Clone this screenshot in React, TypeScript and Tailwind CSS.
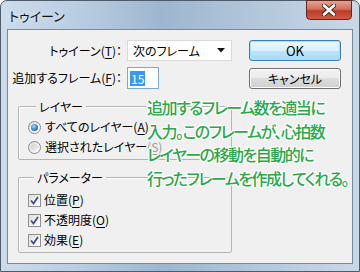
const font = "font-['Noto_Sans_CJK_JP','Noto_Sans',sans-serif] [font-feature-settings:'palt']";

function Key({ k }: { k: string }) {
  return (
    <>
      (<span className="underline underline-offset-[2px]">{k}</span>)
    </>
  );
}

function Radio({ checked }: { checked?: boolean }) {
  return (
    <span className="w-[13px] h-[13px] rounded-full border border-[#8a8a8a] bg-[linear-gradient(135deg,#dcdcdc,#ffffff)] flex items-center justify-center shrink-0">
      {checked ? (
        <span className="w-[7px] h-[7px] rounded-full bg-[radial-gradient(circle_at_40%_35%,#9fdcff,#2a78c8_60%,#1c4f8f)]" />
      ) : (
        <span className="w-[7px] h-[7px] rounded-full bg-[linear-gradient(135deg,#cfcfcf,#f4f4f4)]" />
      )}
    </span>
  );
}

function Check() {
  return (
    <span className="w-[13px] h-[13px] border border-[#8e8f8f] bg-[linear-gradient(135deg,#dedede,#ffffff)] flex items-center justify-center shrink-0">
      <svg width="9" height="9" viewBox="0 0 9 9">
        <path d="M1 4.5 L3.5 7.5 L8 1" fill="none" stroke="#3d4f8f" strokeWidth="1.8" />
      </svg>
    </span>
  );
}

export default function App() {
  return (
    <div className={`w-[360px] h-[272px] overflow-hidden bg-white text-[12px] text-black ${font}`}>
      <div className="w-full h-full rounded-t-[7px] border border-[#4d5b6b] bg-[linear-gradient(to_right,#ccdcec_0%,#b6cadf_25%,#9db6cf_45%,#b2c6da_70%,#c9d8e8_100%)] flex flex-col px-[6px] pb-[7px]">
        <div className="h-[28px] flex items-start justify-between">
          <div className="pl-[2px] pt-[5px] text-[13px] text-[#111] [text-shadow:0_0_6px_rgba(255,255,255,0.8)]">トゥイーン</div>
          <div className="-mt-px mr-px w-[46px] h-[20px] rounded-b-[4px] border border-[#5b2a22] bg-[linear-gradient(to_bottom,#e6a592_0%,#d36f5c_45%,#bd3a28_55%,#cf5a43_100%)] flex items-center justify-center">
            <svg width="14" height="12" viewBox="0 0 14 12">
              <path d="M2 1.5 L12 10.5 M12 1.5 L2 10.5" stroke="#3a2a2a" strokeWidth="4.4" strokeLinecap="round" />
              <path d="M2 1.5 L12 10.5 M12 1.5 L2 10.5" stroke="#ffffff" strokeWidth="2.6" strokeLinecap="round" />
            </svg>
          </div>
        </div>
        <div className="relative flex-1 bg-[#f0f0f0] border border-[#7b8a9b] pt-[10px] pl-[10px]">
          <div className="flex">
            <div className="w-[214px] flex flex-col">
              <div className="h-[21px] flex items-center">
                <div className="w-[104px] flex justify-end whitespace-nowrap">
                  トゥイーン<Key k="T" />：
                </div>
                <div className="ml-[5px] w-[105px] h-[21px] bg-white border border-[#dadada] flex items-center justify-between pl-[5px] pr-[6px]">
                  <span>次のフレーム</span>
                  <svg width="8" height="5" viewBox="0 0 8 5">
                    <path d="M0 0 H8 L4 4.5 Z" fill="#111" />
                  </svg>
                </div>
              </div>
              <div className="mt-[6px] h-[22px] flex items-center">
                <div className="w-[104px] flex justify-end whitespace-nowrap">
                  追加するフレーム<Key k="F" />：
                </div>
                <div className="ml-[5px] w-[32px] h-[22px] bg-white border border-[#7fa9d4] flex items-center pl-[2px]">
                  <span className="bg-[#3399ff] text-white leading-[15px] px-[1px]">15</span>
                </div>
              </div>
              <div className="relative mt-[17px] h-[54px] border border-[#b4b4b4] rounded-[2px] shadow-[inset_1px_1px_0_#ffffff] pt-[10px] pl-[9px]">
                <span className="absolute left-[17px] -top-[9px] px-[3px] bg-[#f0f0f0]">レイヤー</span>
                <div className="h-[20px] flex items-center gap-[4px]">
                  <Radio checked />
                  <span>
                    すべてのレイヤー<Key k="A" />
                  </span>
                </div>
                <div className="h-[20px] flex items-center gap-[4px]">
                  <Radio />
                  <span>
                    選択されたレイヤー<span className="text-[#9a9a9a]"><Key k="S" /></span>
                  </span>
                </div>
              </div>
              <div className="relative mt-[17px] h-[76px] border border-[#b4b4b4] rounded-[2px] shadow-[inset_1px_1px_0_#ffffff] pt-[12px] pl-[9px]">
                <span className="absolute left-[15px] -top-[9px] px-[3px] bg-[#f0f0f0]">パラメーター</span>
                <div className="h-[20px] flex items-center gap-[3px]">
                  <Check />
                  <span>
                    位置<Key k="P" />
                  </span>
                </div>
                <div className="h-[20px] flex items-center gap-[3px]">
                  <Check />
                  <span>
                    不透明度<Key k="O" />
                  </span>
                </div>
                <div className="h-[20px] flex items-center gap-[3px]">
                  <Check />
                  <span>
                    効果<Key k="E" />
                  </span>
                </div>
              </div>
            </div>
            <div className="ml-[17px] w-[92px] flex flex-col gap-[7px]">
              <button className="h-[21px] text-[13px] rounded-[3px] border border-[#3c7fb1] bg-[linear-gradient(to_bottom,#eaf6fd_0%,#d9f0fc_50%,#bee6fd_50%,#a7d9f5_100%)] shadow-[inset_0_0_0_1px_#9fe0fb]">
                OK
              </button>
              <button className="h-[21px] rounded-[3px] border border-[#707070] bg-[linear-gradient(to_bottom,#f2f2f2_0%,#ebebeb_50%,#dddddd_50%,#cfcfcf_100%)] shadow-[inset_0_0_0_1px_#fcfcfc]">
                キャンセル
              </button>
            </div>
          </div>
          <div className="absolute left-[139px] top-[66px] text-[16px] font-medium tracking-[-1.5px] leading-[23.5px] text-[#2aa84a] whitespace-nowrap [text-shadow:1px_0_0_#fff,-1px_0_0_#fff,0_1px_0_#fff,0_-1px_0_#fff,1px_1px_0_#fff,-1px_-1px_0_#fff,1px_-1px_0_#fff,-1px_1px_0_#fff]">
            追加するフレーム数を適当に
            <br />
            入力。このフレームが、心拍数
            <br />
            レイヤーの移動を自動的に
            <br />
            行ったフレームを作成してくれる。
          </div>
        </div>
      </div>
    </div>
  );
}
